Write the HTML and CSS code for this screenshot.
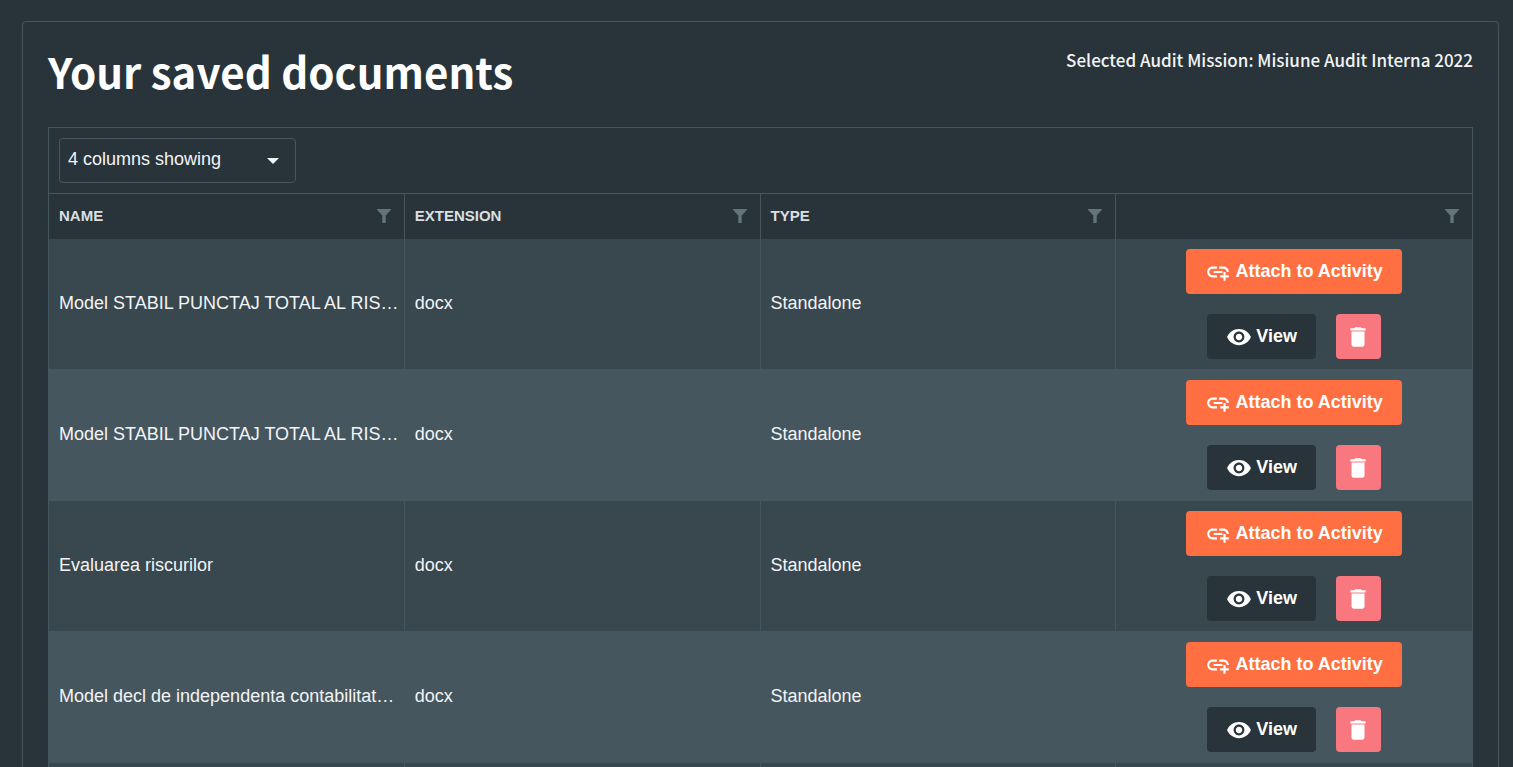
FILE: index.html
```html
<!DOCTYPE html>
<html lang="en">
<head>
<meta charset="utf-8">
<title>Your saved documents</title>
<link rel="stylesheet" href="styles.css">
<script src="app.js" defer></script>
</head>
<body>
<svg class="sprite" aria-hidden="true">
  <symbol id="i-filter" viewBox="0 0 14 14"><path d="M0.6 0h12.8a.5.5 0 0 1 .4.9L8.7 6.6V14H5.300V6.600L.2.900A.5.500 0 0 1 .6 0z"/></symbol>
  <symbol id="i-link" viewBox="0 0 24 24"><path d="M8 11h8v2H8v-2zm12.1 1H22c0-2.760-2.240-5-5-5h-4v1.900h4c1.710 0 3.100 1.390 3.100 3.100zM3.900 12c0-1.710 1.390-3.100 3.100-3.100h4V7H7c-2.760 0-5 2.240-5 5s2.240 5 5 5h4v-1.900H7c-1.710 0-3.100-1.390-3.100-3.100zM19 12h-2v3h-3v2h3v3h2v-3h3v-2h-3v-3z"/></symbol>
  <symbol id="i-eye" viewBox="0 0 24 24"><path d="M12 4.500C7 4.500 2.730 7.610 1 12c1.730 4.390 6 7.500 11 7.500s9.270-3.110 11-7.500c-1.730-4.390-6-7.500-11-7.500zM12 17c-2.760 0-5-2.240-5-5s2.240-5 5-5 5 2.240 5 5-2.240 5-5 5zm0-8c-1.660 0-3 1.340-3 3s1.340 3 3 3 3-1.340 3-3-1.340-3-3-3z"/></symbol>
  <symbol id="i-trash" viewBox="0 0 24 24"><path d="M6 19c0 1.100.9 2 2 2h8c1.100 0 2-.9 2-2V7H6v12zM19 4h-3.500l-1-1h-5l-1 1H5v2h14V4z"/></symbol>
</svg>
<main class="panel">
  <header class="panel-head">
    <h1 class="title">Your saved documents</h1>
    <p class="mission">Selected Audit Mission: Misiune Audit Interna 2022</p>
  </header>
  <section class="grid">
    <div class="toolbar">
      <div class="picker">
        <select class="picker-select" aria-label="Columns"><option>4 columns showing</option></select>
        <svg class="picker-arrow" viewBox="0 0 12 6" aria-hidden="true"><path d="M0 0h12L6 6z"/></svg>
      </div>
    </div>
    <table class="table">
      <thead>
        <tr>
          <th scope="col"><div class="th"><span>NAME</span><button class="filter" aria-label="Filter name"><svg><use href="#i-filter"/></svg></button></div></th>
          <th scope="col"><div class="th"><span>EXTENSION</span><button class="filter" aria-label="Filter extension"><svg><use href="#i-filter"/></svg></button></div></th>
          <th scope="col"><div class="th"><span>TYPE</span><button class="filter" aria-label="Filter type"><svg><use href="#i-filter"/></svg></button></div></th>
          <th scope="col"><div class="th"><span></span><button class="filter" aria-label="Filter actions"><svg><use href="#i-filter"/></svg></button></div></th>
        </tr>
      </thead>
      <tbody id="rows"></tbody>
    </table>
  </section>
</main>
</body>
</html>
```
FILE: app.js
```js
const documents = [
  { name: "Model STABIL PUNCTAJ TOTAL AL RIS…", extension: "docx", type: "Standalone" },
  { name: "Model STABIL PUNCTAJ TOTAL AL RIS…", extension: "docx", type: "Standalone" },
  { name: "Evaluarea riscurilor", extension: "docx", type: "Standalone" },
  { name: "Model decl de independenta contabilitat…", extension: "docx", type: "Standalone" },
  { name: "", extension: "", type: "" }
];

const icon = (name) => `<svg class="icon" aria-hidden="true"><use href="#i-${name}"/></svg>`;

const actions = `
  <div class="actions">
    <button class="btn btn-attach">${icon("link")}Attach to Activity</button>
    <div class="actions-row">
      <button class="btn btn-view">${icon("eye")}View</button>
      <button class="btn btn-delete" aria-label="Delete">${icon("trash")}</button>
    </div>
  </div>`;

document.getElementById("rows").innerHTML = documents
  .map((d) => `<tr><td>${d.name}</td><td>${d.extension}</td><td>${d.type}</td><td class="cell-actions">${d.name ? actions : ""}</td></tr>`)
  .join("");
```
FILE: styles.css
```css
* { box-sizing: border-box; }

body {
  margin: 0;
  height: 100vh;
  overflow: hidden;
  padding: 21px 14px 0 22px;
  background: #28343a;
  color: #f2f4f6;
  font-family: "Liberation Sans", Arial, sans-serif;
  font-size: 18px;
}

.sprite { display: none; }

.panel {
  padding: 25px;
  border: 1px solid #46565e;
  border-radius: 4px;
}

.panel-head {
  display: flex;
  justify-content: space-between;
  align-items: flex-start;
  height: 80px;
}

.title, .mission {
  margin: 0;
  font-family: "Noto Sans CJK SC", "Noto Sans", sans-serif;
}

.title {
  color: #fff;
  font-size: 42px;
  font-weight: 700;
  line-height: 48px;
}

.mission {
  font-size: 17px;
  font-weight: 500;
  line-height: 26px;
}

.grid { border: 1px solid #46565e; }

.toolbar {
  padding: 10px;
  border-bottom: 1px solid #46565e;
}

.picker { position: relative; width: 237px; }

.picker-select {
  display: block;
  width: 100%;
  height: 45px;
  padding: 0 8px 4px;
  appearance: none;
  background: transparent;
  border: 1px solid #46565e;
  border-radius: 4px;
  color: inherit;
  font: inherit;
}

.picker-arrow {
  position: absolute;
  top: 20px;
  right: 17px;
  width: 12px;
  height: 6px;
  fill: currentColor;
  pointer-events: none;
}

.table {
  width: 100%;
  table-layout: fixed;
  border-spacing: 0;
}

th, td { border-right: 1px solid #46565e; text-align: left; }
th:last-child, td:last-child { border-right: 0; }

th {
  height: 45px;
  padding: 0 13px 2px 10px;
  color: #dcdfe1;
  font-size: 15px;
}

.th { display: flex; justify-content: space-between; align-items: center; }

.filter {
  width: 14px;
  height: 14px;
  padding: 0;
  border: 0;
  background: none;
  fill: #63747b;
}

.filter svg { display: block; width: 14px; height: 14px; }

td {
  height: 131px;
  padding: 0 4px 2px 10px;
  border-bottom: 1px solid #46565e;
  background: #39474e;
  overflow: hidden;
  text-overflow: ellipsis;
  white-space: nowrap;
}

tr:nth-child(even) td { background: #46565e; }

.cell-actions { padding: 10px; }

.actions, .actions-row { display: flex; }
.actions { flex-direction: column; align-items: center; gap: 20px; }
.actions-row { gap: 20px; }

.btn {
  display: flex;
  align-items: center;
  gap: 4px;
  height: 45px;
  padding: 0 19px;
  border: 0;
  border-radius: 4px;
  color: #fff;
  font: inherit;
  font-weight: 700;
}

.icon { width: 26px; height: 26px; fill: currentColor; }

.btn-attach { background: #ff6f42; }
.btn-view { background: #28343a; }
.btn-delete { width: 45px; padding: 0; justify-content: center; background: #f97880; }
```
